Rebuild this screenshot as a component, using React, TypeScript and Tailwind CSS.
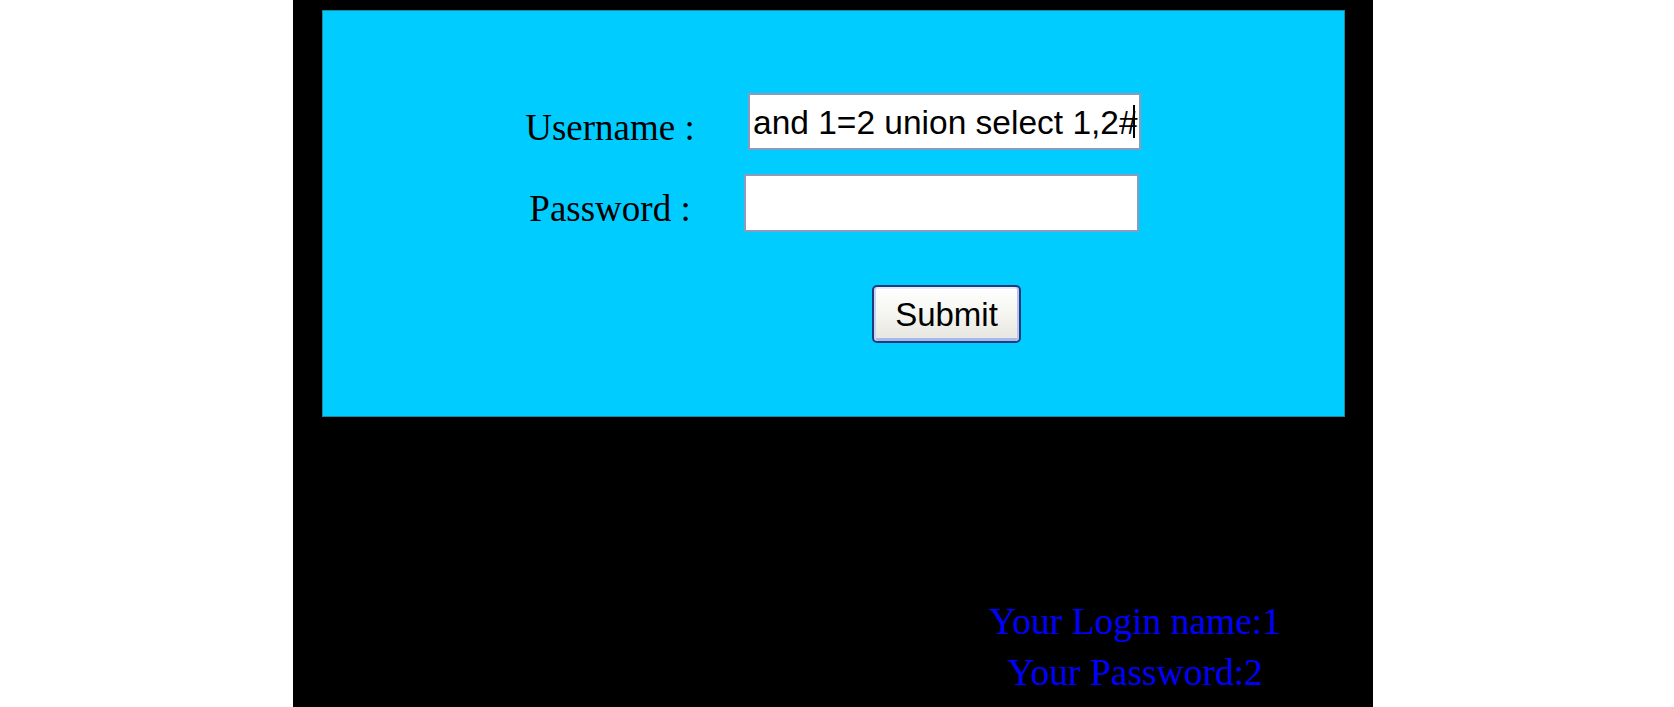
export default function App() {
  return (
    <div className="w-full h-[707px] bg-white overflow-hidden">
      <div className="ml-[293px] w-[1080px] h-[707px] bg-black pt-[10px] pl-[29px]">
        {/* login form */}
        <div className="w-[1023px] h-[407px] bg-[#00ccff] border border-[#1d86a3] pt-[82px] pl-[176px]">
          <div className="flex items-center h-[57px]">
            <div className="w-[222px] mt-[12px] text-center text-[37px] leading-[40px] text-black font-['Liberation_Serif',serif]">
              Username :
            </div>
            <div className="relative ml-[27px] w-[393px] h-[57px] bg-white border-2 border-[#8a9cbc] overflow-hidden flex items-center pl-[3px] pt-[3px]">
              <span className="whitespace-nowrap text-[33.5px] leading-[38px] text-black font-['Liberation_Sans',Arial,sans-serif]">
                and 1=2 union select 1,2#
              </span>
              <span className="absolute left-[383px] top-[10px] w-[2px] h-[33px] bg-black" />
            </div>
          </div>

          <div className="flex items-center h-[58px] mt-[24px]">
            <div className="w-[222px] mt-[12px] text-center text-[37px] leading-[40px] text-black font-['Liberation_Serif',serif]">
              Password :
            </div>
            <div className="ml-[23px] w-[395px] h-[58px] bg-white border-2 border-[#8a9cbc]" />
          </div>

          <div className="mt-[53px] pl-[373px]">
            <button className="w-[149px] h-[58px] rounded-[5px] border-2 border-[#1f3b7a] bg-gradient-to-b from-[#ffffff] via-[#f5f5f1] to-[#e6e5de] shadow-[inset_2px_0_0_#c9d3f4,inset_-2px_0_0_#b7c5ee,inset_0_-3px_0_#a6b8ec,inset_0_2px_0_#e4e9fb] flex items-center justify-center pt-[1px] text-[33px] leading-[38px] text-black font-['Liberation_Sans',Arial,sans-serif]">
              Submit
            </button>
          </div>
        </div>

        {/* result */}
        <div className="mt-[179px] ml-[575px] w-[476px] text-center text-[37.5px] leading-[51px] text-[#0000ff] font-['Liberation_Serif',serif]">
          <div>Your Login name:1</div>
          <div>Your Password:2</div>
        </div>
      </div>
    </div>
  );
}
